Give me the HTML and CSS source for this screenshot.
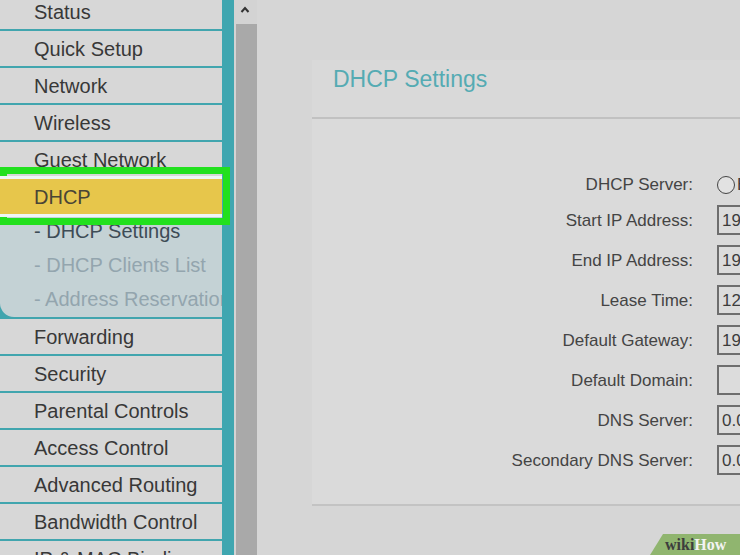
FILE: index.html
```html
<!DOCTYPE html>
<html>
<head>
    <title>DHCP Settings</title>
    <link rel="stylesheet" href="styles.css">
</head>
<body>
    <div class="sidebar">
        <div class="nav-item">Status</div>
        <div class="nav-item">Quick Setup</div>
        <div class="nav-item">Network</div>
        <div class="nav-item">Wireless</div>
        <div class="nav-item">Guest Network</div>
        <div class="nav-item active">DHCP</div>
        <div class="submenu">
            <div class="submenu-inner">
                <div class="sub-item current">- DHCP Settings</div>
                <div class="sub-item">- DHCP Clients List</div>
                <div class="sub-item">- Address Reservation</div>
            </div>
        </div>
        <div class="nav-item">Forwarding</div>
        <div class="nav-item">Security</div>
        <div class="nav-item">Parental Controls</div>
        <div class="nav-item">Access Control</div>
        <div class="nav-item">Advanced Routing</div>
        <div class="nav-item">Bandwidth Control</div>
        <div class="nav-item">IP &amp; MAC Binding</div>
    </div>
    <div class="teal-bar"></div>
    <div class="scrollbar">
        <div class="scroll-up">
            <svg width="10" height="7" viewBox="0 0 10 7"><polyline points="1.5,6 5,2 8.5,6" fill="none" stroke="#333" stroke-width="2"/></svg>
        </div>
        <div class="scroll-thumb"></div>
    </div>

    <div class="main">
        <div class="panel">
            <div class="panel-header">DHCP Settings</div>
            <div class="panel-body">
                <div class="form-grid">
                    <label>DHCP Server:</label>
                    <div class="radio-row"><span class="radio"></span><span>Enable</span></div>

                    <label>Start IP Address:</label>
                    <div class="field">192.168.0.100</div>

                    <label>End IP Address:</label>
                    <div class="field">192.168.0.199</div>

                    <label>Lease Time:</label>
                    <div class="field">120</div>

                    <label>Default Gateway:</label>
                    <div class="field">192.168.0.1</div>

                    <label>Default Domain:</label>
                    <div class="field"></div>

                    <label>DNS Server:</label>
                    <div class="field">0.0.0.0</div>

                    <label>Secondary DNS Server:</label>
                    <div class="field">0.0.0.0</div>
                </div>
            </div>
        </div>
    </div>

    <!-- annotation overlays -->
    <div class="highlight-box"></div>
    <div class="watermark"><span class="wiki">wiki</span><span class="how">How</span></div>
</body>
</html>
```

FILE: styles.css
```css
html, body { margin: 0; padding: 0; }
body { width: 740px; height: 555px; overflow: hidden; display: flex; background: #d6d6d6; font-family: "Liberation Sans", Arial, sans-serif; position: relative; }

.sidebar { width: 222px; flex: none; margin-top: -6px; background: #d7d7d7; overflow: hidden; white-space: nowrap; }
.nav-item { height: 35px; line-height: 37px; padding-left: 34px; font-size: 20px; color: #383838; border-bottom: 2px solid #41a5ae; }
.nav-item.active { background: #e7c64b; color: #4a4536; border-bottom: none; position: relative; z-index: 1; box-shadow: 0 -3px 0 #eef6f6, 0 3px 0 #eef6f6; }
.submenu { background: #41a5ae; border-bottom: 2px solid #41a5ae; }
.submenu-inner { background: #c4d2d5; padding-bottom: 1px; border-bottom-left-radius: 14px; }
.sub-item { height: 34px; line-height: 35px; padding-left: 34px; font-size: 20px; color: #93a5ae; }
.sub-item.current { color: #3e4c56; }

.teal-bar { width: 12px; flex: none; background: #3fa6b0; }
.scrollbar { width: 23px; flex: none; display: flex; flex-direction: column; background: #d3d3d3; }
.scroll-up { height: 24px; display: flex; justify-content: center; padding-top: 6px; box-sizing: border-box; padding-right: 2px; }
.scroll-thumb { flex: 1; margin-left: 2px; background: #a9a9a9; }

.main { flex: 1; padding: 60px 0 0 55px; min-width: 0; }
.panel { background: #dadada; width: 500px; }
.panel-header { height: 51px; padding: 6px 0 0 21px; font-size: 23px; line-height: 27px; color: #55abb3; border-bottom: 2px solid #c1c1c1; background: #d9d9d9; }
.panel-body { padding: 55px 0 29px 0; border-bottom: 2px solid #c3c3c3; }
.form-grid { display: grid; grid-template-columns: 381px 1fr; column-gap: 24px; row-gap: 10px; align-items: center; }
.form-grid label { text-align: right; font-size: 17px; line-height: 21px; color: #444; }
.radio-row { height: 20px; display: flex; align-items: center; gap: 2px; font-size: 17px; color: #3c3c3c; white-space: nowrap; }
.radio { width: 16px; height: 16px; border: 1.5px solid #444; border-radius: 50%; background: #e2e2e2; }
.field { height: 30px; box-sizing: border-box; width: 160px; border: 2px solid #6e6e6e; background: #dcdcdc; padding-left: 3px; font-size: 17px; line-height: 27px; color: #3c3c3c; white-space: nowrap; overflow: hidden; }

.highlight-box { position: absolute; left: 0; top: 167px; width: 230px; height: 58px; box-sizing: border-box; border: 7px solid #22e01e; }
.watermark { position: absolute; right: 0; bottom: 0; width: 90px; height: 21px; background: #90b56f; clip-path: polygon(13px 0, 100% 0, 100% 100%, 0 100%); font-family: "Liberation Serif", "Times New Roman", serif; font-weight: bold; font-size: 16px; line-height: 22px; padding-left: 15px; box-sizing: border-box; }
.watermark .wiki { color: #3d3d3d; }
.watermark .how { color: #f3f3f3; }
```
